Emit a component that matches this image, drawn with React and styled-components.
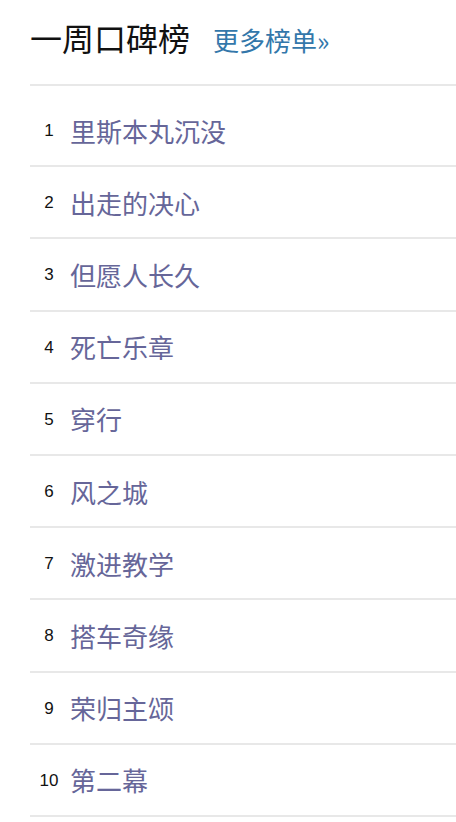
import styled, { createGlobalStyle } from 'styled-components';

const GlobalStyle = createGlobalStyle`
  html, body {
    margin: 0;
    padding: 0;
    background: #fff;
  }
  body {
    font-family: "Liberation Sans", "Noto Sans CJK SC", sans-serif;
  }
`;

const movies = [
  '里斯本丸沉没',
  '出走的决心',
  '但愿人长久',
  '死亡乐章',
  '穿行',
  '风之城',
  '激进教学',
  '搭车奇缘',
  '荣归主颂',
  '第二幕',
];

function App() {
  return (
    <>
      <GlobalStyle />
      <Board>
        <Header>
          <Title>一周口碑榜</Title>
          <MoreLink href="#">更多榜单»</MoreLink>
        </Header>
        <List>
          {movies.map((name, i) => (
            <Row key={name}>
              <Rank>{i + 1}</Rank>
              <MovieName href="#">{name}</MovieName>
            </Row>
          ))}
        </List>
      </Board>
    </>
  );
}

export default App;

const Board = styled.div`
  padding-left: 30px;
  width: 100%;
  box-sizing: border-box;
`;

const Header = styled.div`
  display: flex;
  align-items: baseline;
  height: 86px;
  box-sizing: border-box;
  padding-top: 17px;
  border-bottom: 2px solid #e8e8e8;
`;

const Title = styled.h2`
  margin: 0;
  font-family: "Noto Sans CJK SC", sans-serif;
  font-size: 32px;
  font-weight: normal;
  line-height: 40px;
  color: #111;
`;

const MoreLink = styled.a`
  margin-left: 23px;
  font-family: "Noto Sans CJK SC", sans-serif;
  font-size: 26px;
  color: #3377aa;
  text-decoration: none;
`;

const List = styled.ul`
  list-style: none;
  margin: 0;
  padding: 9px 0 0;
`;

const Row = styled.li`
  display: flex;
  align-items: center;
  height: 70.2px;
  border-bottom: 2px solid #e8e8e8;
`;

const Rank = styled.span`
  width: 38px;
  padding-top: 2px;
  text-align: center;
  font-family: "Liberation Sans", sans-serif;
  font-size: 17px;
  color: #111;
`;

const MovieName = styled.a`
  margin-left: 2px;
  font-family: "Noto Sans CJK SC", sans-serif;
  font-size: 26px;
  color: #666699;
  text-decoration: none;
`;
